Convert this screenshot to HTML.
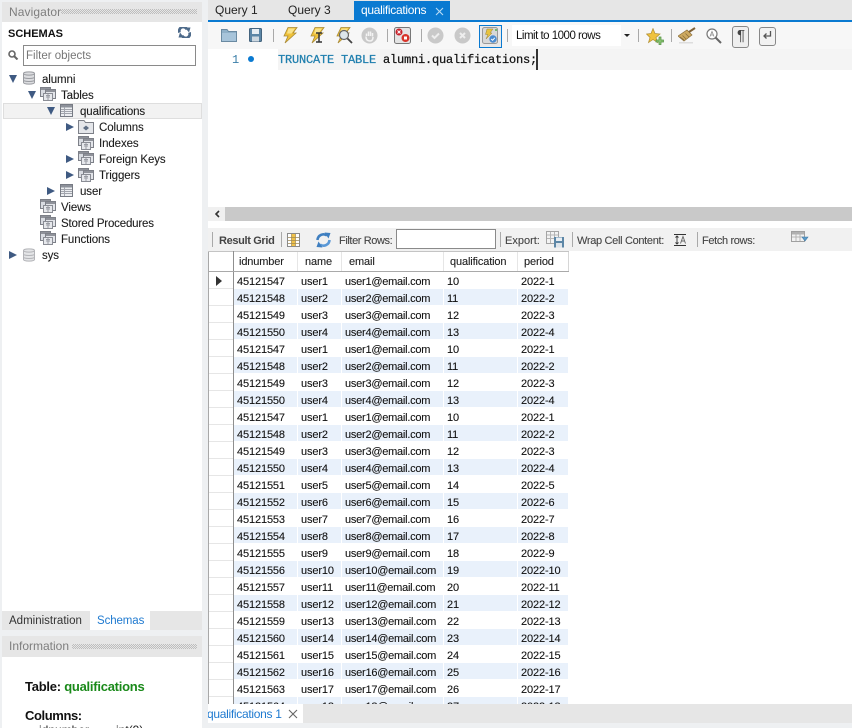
<!DOCTYPE html>
<html><head><meta charset="utf-8"><title>MySQL Workbench</title>
<style>
html,body{margin:0;padding:0}
body{width:852px;height:728px;overflow:hidden;position:relative;background:#eef0f2;font-family:"Liberation Sans",sans-serif;font-size:11.5px;color:#1c1c1c}
div,span,svg{position:absolute;white-space:nowrap}
.t{line-height:14px;height:14px}
.tree{letter-spacing:-.1px;-webkit-text-stroke:.1px #1c1c1c}
.tri{width:0;height:0}
.d{border-top:4.5px solid transparent;border-bottom:4.5px solid transparent;border-left:8px solid #3f5a82}
.o{border-left:4.5px solid transparent;border-right:4.5px solid transparent;border-top:8px solid #3f5a82}
.dots{height:5px;background:repeating-conic-gradient(#bdbdbd 0 25%,#e6e6e6 0 50%) 0 0/2px 2px}
.sep{width:1px;background:#a9a9a9}
.r{left:0;width:360px;height:17px}
.r span{top:3px;line-height:15px;font-size:11px;letter-spacing:-.13px;color:#111;-webkit-text-stroke:.1px #111}
.b{background:#e9f1fb;top:0;height:16px}
.a{left:29px}.n{left:93px}.e{left:137px;letter-spacing:-.24px!important}.q{left:239px}.p{left:313px}
.r.h span{font-size:11px;color:#222;line-height:20px;top:0}
.rt{font-size:11px;color:#444;top:234px;-webkit-text-stroke:.1px #444}
</style></head><body>

<svg width="0" height="0" style="left:0;top:0">
<defs>
<g id="grp"><rect x=".5" y=".5" width="10" height="9" fill="#d9dce2" stroke="#7d8088"/><rect x="1" y="1" width="9" height="2" fill="#8f929a"/><rect x="5.500" y="2.500" width="10" height="9" fill="#e3e5ea" stroke="#7d8088"/><rect x="6" y="3" width="9" height="2" fill="#8f929a"/><rect x="3.500" y="6.500" width="9" height="7" fill="#e6e8ec" stroke="#8a8d95"/><path d="M6 10h4M6 8.500h4M8 7v6" stroke="#9a9da5"/></g>
<g id="tbl"><rect x=".5" y=".5" width="12" height="12" fill="#eceef1" stroke="#777b84"/><rect x="1" y="1" width="11" height="2.500" fill="#8d919a"/><path d="M1 5.500h11M1 7.500h11M1 9.500h11M4.500 3v9" stroke="#a2a5ad"/></g>
<g id="db"><path d="M.5 2.500C.5 .4 11.500 .4 11.500 2.500V11.500C11.500 13.600 .5 13.600 .5 11.500Z" fill="#dcdde0" stroke="#9a9ca1"/><path d="M.5 2.500C.5 4.600 11.500 4.600 11.500 2.500M.5 6C.5 8 11.500 8 11.500 6M.5 9C.5 11 11.500 11 11.500 9" fill="none" stroke="#9a9ca1"/></g>
<g id="bolt"><path d="M6 .5H15L11 6H14L3 16L6 9H2Z" fill="#efc23a" stroke="#a98a36" stroke-width=".8"/><path d="M6.500 1.500H13L9.500 6.500H5Z" fill="#f8e38c"/></g>
<g id="gc"><circle cx="8.500" cy="8.500" r="8" fill="#c9c9c9"/></g>
</defs></svg>

<!-- LEFT PANEL -->
<div style="left:2px;top:2px;width:200px;height:20px;background:#e6e6e6"></div>
<div class="t" style="left:9px;top:5px;font-size:12px;color:#7e7e7e;letter-spacing:.1px">Navigator</div>
<div class="dots" style="left:61px;top:9px;width:136px"></div>
<div style="left:2px;top:22px;width:200px;height:589px;background:#fff"></div>
<div class="t" style="left:8px;top:27px;font-weight:bold;font-size:11px;color:#111">SCHEMAS</div>
<svg style="left:178px;top:27px" width="13" height="11" viewBox="0 0 13 11"><path d="M1.500 5.500A4 4 0 0 1 9 2.500M11.500 5.500A4 4 0 0 1 4 8.500" fill="none" stroke="#4d6a8a" stroke-width="2.800"/><path d="M7 .5L12.500 .5L11 5.500ZM6 10.500L.5 10.500L2 5.500Z" fill="#4d6a8a"/></svg>
<svg style="left:8px;top:50px" width="11" height="10" viewBox="0 0 11 10"><circle cx="4" cy="4" r="3" fill="none" stroke="#666" stroke-width="1.600"/><path d="M6 6L9.500 9.500" stroke="#666" stroke-width="2"/></svg>
<div style="left:23px;top:45px;width:171px;height:19px;border:1px solid #8a8a8a;background:#fff"></div>
<div class="t" style="left:26px;top:49px;color:#777;font-size:11.500px">Filter objects</div>

<div class="tri o" style="left:9px;top:75px"></div>
<svg style="left:23px;top:71px" width="12" height="14"><use href="#db"/></svg>
<div class="t tree" style="left:42px;top:73px">alumni</div>
<div class="tri o" style="left:28px;top:91px"></div>
<svg style="left:40px;top:87px" width="16" height="14"><use href="#grp"/></svg>
<div class="t tree" style="left:61px;top:89px">Tables</div>
<div style="left:3px;top:103px;width:197px;height:14px;background:#f2f2f2;border:1px solid #dedede"></div>
<div class="tri o" style="left:47px;top:107px"></div>
<svg style="left:60px;top:104px" width="13" height="13"><use href="#tbl"/></svg>
<div class="t tree" style="left:80px;top:105px">qualifications</div>
<div class="tri d" style="left:66px;top:123px"></div>
<svg style="left:78px;top:120px" width="16" height="14" viewBox="0 0 16 14"><path d="M.5 13.500V.5H6L7.500 2.500H15.500V13.500Z" fill="#e4e6ea" stroke="#7d8088"/><path d="M5 8L8 5.500L11 8L8 10.500Z" fill="#5f6f85"/></svg>
<div class="t tree" style="left:99px;top:121px">Columns</div>
<svg style="left:78px;top:136px" width="16" height="14"><use href="#grp"/></svg>
<div class="t tree" style="left:99px;top:137px">Indexes</div>
<div class="tri d" style="left:66px;top:155px"></div>
<svg style="left:78px;top:151px" width="16" height="15"><use href="#grp"/></svg>
<div class="t tree" style="left:99px;top:153px">Foreign Keys</div>
<div class="tri d" style="left:66px;top:171px"></div>
<svg style="left:78px;top:168px" width="16" height="14"><use href="#grp"/></svg>
<div class="t tree" style="left:99px;top:169px">Triggers</div>
<div class="tri d" style="left:47px;top:187px"></div>
<svg style="left:60px;top:184px" width="13" height="13"><use href="#tbl"/></svg>
<div class="t tree" style="left:80px;top:185px">user</div>
<svg style="left:40px;top:199px" width="16" height="14"><use href="#grp"/></svg>
<div class="t tree" style="left:61px;top:201px">Views</div>
<svg style="left:40px;top:215px" width="16" height="14"><use href="#grp"/></svg>
<div class="t tree" style="left:61px;top:217px;letter-spacing:-.18px">Stored Procedures</div>
<svg style="left:40px;top:231px" width="16" height="14"><use href="#grp"/></svg>
<div class="t tree" style="left:61px;top:233px">Functions</div>
<div class="tri d" style="left:9px;top:251px"></div>
<svg style="left:23px;top:248px;opacity:.75" width="12" height="14"><use href="#db"/></svg>
<div class="t tree" style="left:42px;top:249px">sys</div>

<div style="left:2px;top:611px;width:200px;height:19px;background:#e6e6e6"></div>
<div style="left:90px;top:611px;width:60px;height:19px;background:#fff"></div>
<div class="t" style="left:9px;top:614px;color:#333">Administration</div>
<div class="t" style="left:97px;top:614px;color:#1f7ad0;letter-spacing:-.1px">Schemas</div>
<div style="left:2px;top:636px;width:200px;height:21px;background:#e6e6e6"></div>
<div class="t" style="left:9px;top:639px;color:#7e7e7e;font-size:12px">Information</div>
<div class="dots" style="left:72px;top:644px;width:125px"></div>
<div style="left:2px;top:657px;width:200px;height:71px;background:#fff;overflow:hidden">
<div class="t" style="left:23px;top:23px;font-size:13px;font-weight:bold;color:#111;letter-spacing:-.25px">Table: <span style="position:static;color:#1a8a1a">qualifications</span></div>
<div class="t" style="left:23px;top:52px;font-size:13px;font-weight:bold;color:#111;letter-spacing:-.4px">Columns:</div>
<div class="t" style="left:37px;top:66px;font-size:12px">idnumber</div>
<div class="t" style="left:114px;top:66px;font-size:12px">int(9)</div>
</div>

<!-- TOP TABS -->
<div style="left:208px;top:0;width:644px;height:20px;background:#e6e6e6"></div>
<div class="t" style="left:215px;top:3px;font-size:12px;color:#222">Query 1</div>
<div class="t" style="left:288px;top:3px;font-size:12px;color:#222">Query 3</div>
<div style="left:354px;top:1px;width:96px;height:19px;background:#0a7ad1"></div>
<div class="t" style="left:361px;top:3px;font-size:12px;color:#fff;letter-spacing:-.3px">qualifications</div>
<svg style="left:435px;top:7px" width="9" height="9"><path d="M1 1L8 8M8 1L1 8" stroke="#b9dcf5" stroke-width="1.100"/></svg>
<div style="left:208px;top:20px;width:644px;height:2px;background:#0a7ad1"></div>

<!-- TOOLBAR -->
<div style="left:208px;top:22px;width:644px;height:27px;background:#f7f7f7"></div>
<svg style="left:221px;top:28px" width="16" height="14" viewBox="0 0 16 14"><path d="M.5 13.500V1.500H6L7.500 3.500H15.500V13.500Z" fill="#8fb0c8" stroke="#6a8aa2"/><rect x="1" y="5" width="14" height="8" fill="#a7c4da"/></svg>
<svg style="left:249px;top:28px" width="13" height="14" viewBox="0 0 13 14"><rect x=".5" y=".5" width="12" height="13" rx="1" fill="#5c86a6" stroke="#44647e"/><rect x="3" y="1" width="7" height="5" fill="#e8eef3"/><rect x="3" y="8.500" width="7" height="5" fill="#cfd9e1"/></svg>
<div class="sep" style="left:273px;top:29px;height:13px"></div>
<svg style="left:282px;top:27px" width="16" height="17"><use href="#bolt"/></svg>
<svg style="left:309px;top:27px" width="16" height="17"><use href="#bolt"/></svg>
<svg style="left:315px;top:32px" width="8" height="11" viewBox="0 0 8 11"><path d="M1 1H7M1 10H7M4 1V10" stroke="#333" stroke-width="1.500"/></svg>
<svg style="left:335px;top:27px" width="16" height="17"><use href="#bolt"/></svg>
<svg style="left:338px;top:29px" width="15" height="15" viewBox="0 0 15 15"><circle cx="6" cy="6" r="4.500" fill="#dde6ea" stroke="#666" stroke-width="1.200"/><path d="M9.500 9.500L14 14" stroke="#444" stroke-width="1.800"/></svg>
<svg style="left:361px;top:27px" width="17" height="17"><use href="#gc"/><path d="M5.500 9V6.500M7.500 9V4.500M9.500 9V4.500M11.500 9.500V6M5 9.500C5 13 7 14 9 14C11 14 12 12.500 12 10" stroke="#f3f3f3" stroke-width="1.500" fill="none"/></svg>
<div class="sep" style="left:387px;top:29px;height:13px"></div>
<svg style="left:394px;top:27px" width="17" height="17" viewBox="0 0 17 17"><rect x=".5" y=".5" width="16" height="16" rx="2" fill="#e4e4e4" stroke="#777"/><circle cx="5" cy="5" r="3.500" fill="#c8232c"/><path d="M3.500 3.500L6.500 6.500M6.500 3.500L3.500 6.500" stroke="#fff"/><circle cx="11.500" cy="11" r="4" fill="#d8342a"/><rect x="10" y="9.500" width="3" height="3" fill="#fff"/></svg>
<div class="sep" style="left:421px;top:29px;height:13px"></div>
<svg style="left:427px;top:27px" width="17" height="17"><use href="#gc"/><path d="M5 8.500L7.500 11L12 6.500" stroke="#eee" stroke-width="2" fill="none"/></svg>
<svg style="left:454px;top:27px" width="17" height="17"><use href="#gc"/><path d="M6 6L11 11M11 6L6 11" stroke="#eee" stroke-width="2" fill="none"/></svg>
<div style="left:479px;top:25px;width:21px;height:21px;border:1px solid #0a7ad1;background:#e9e9e9"></div>
<svg style="left:482px;top:27px" width="17" height="18" viewBox="0 0 17 18"><rect x=".5" y=".5" width="15" height="16" rx="2" fill="#d8d8d8" stroke="#999"/><path d="M5 2H11L8 6H10L4 12L6 7.500H3.500Z" fill="#e8c33e" stroke="#9c8436" stroke-width=".5"/><circle cx="11" cy="12" r="3.700" fill="#4a8bd0"/><path d="M9.200 12L10.600 13.300L12.800 10.800" stroke="#fff" fill="none"/><circle cx="14" cy="3" r="1" fill="#58b050"/></svg>
<div class="sep" style="left:507px;top:29px;height:13px"></div>
<div style="left:512px;top:25px;width:121px;height:21px;background:#fff"></div>
<div style="left:621px;top:25px;width:12px;height:21px;background:#f7f7f7"></div>
<div class="t" style="left:516px;top:29px;font-size:11.500px;letter-spacing:-.5px;color:#111">Limit to 1000 rows</div>
<div class="tri" style="left:624px;top:34px;border-left:3.500px solid transparent;border-right:3.500px solid transparent;border-top:3.500px solid #222"></div>
<div class="sep" style="left:638px;top:29px;height:13px"></div>
<svg style="left:646px;top:28px" width="18" height="17" viewBox="0 0 18 17"><path d="M7 .5L9 5.500L14 6L10 9.500L11.500 14.500L7 11.500L2.500 14.500L4 9.500L.5 6L5 5.500Z" fill="#efc23d" stroke="#b18f34" stroke-width=".7"/><path d="M13 9V12M10 12H13V9H15V12H17.500V14H15V16.500H13V14H10Z" fill="#8fc977" stroke="#4f8e3e" stroke-width=".7"/></svg>
<div class="sep" style="left:671px;top:29px;height:13px"></div>
<svg style="left:678px;top:27px" width="18" height="17" viewBox="0 0 18 17"><path d="M0 9L9 3L14 8L6 14Z" fill="#cda95f" stroke="#8b6f3c" stroke-width=".7"/><path d="M11 5L17 1" stroke="#7f6238" stroke-width="2"/><path d="M2 10L6 13M4.500 8.500L8 12M7.500 6.500L11 10" stroke="#8b6f3c" stroke-width=".8"/><rect x="1" y="15" width="14" height="1.500" fill="#ddd"/></svg>
<svg style="left:706px;top:28px" width="16" height="16" viewBox="0 0 16 16"><circle cx="6" cy="6" r="5" fill="#fff" stroke="#777" stroke-width="1.200"/><path d="M9.500 9.500L15 15" stroke="#666" stroke-width="2"/><path d="M4 8.500L6 3.500L8 8.500M4.800 7H7.200" stroke="#8a8a8a" fill="none" stroke-width=".8"/></svg>
<div style="left:732px;top:26px;width:15px;height:20px;border:1px solid #888;border-radius:3px;background:#efefef"></div>
<div class="t" style="left:733px;top:27px;width:16px;height:18px;line-height:18px;text-align:center;font-size:15px;color:#444">¶</div>
<div style="left:759px;top:27px;width:15px;height:17px;border:1px solid #888;border-radius:3px;background:#f2f2f2"></div>
<svg style="left:762px;top:31px" width="10" height="9" viewBox="0 0 10 9"><path d="M8.500 0V5H2M4.500 2.500L2 5L4.500 7.500" stroke="#555" stroke-width="1.300" fill="none"/></svg>

<!-- EDITOR -->
<div style="left:208px;top:49px;width:644px;height:158px;background:#fff"></div>
<div style="left:278px;top:49px;width:574px;height:21px;background:#f4f4f4"></div>
<div class="t" style="left:232px;top:53px;font-family:'Liberation Mono',monospace;font-size:12px;color:#3a7ea8">1</div>
<div style="left:248px;top:56px;width:6px;height:6px;border-radius:50%;background:#0a7ad1"></div>
<div class="t" style="left:278px;top:53px;font-family:'Liberation Mono',monospace;font-size:12px;letter-spacing:-.2px;color:#111;-webkit-text-stroke:.25px #111"><span style="position:static;color:#1f7fae;-webkit-text-stroke:.25px #1f7fae">TRUNCATE TABLE</span> alumni.qualifications;</div>
<div style="left:536px;top:49px;width:2px;height:21px;background:#333"></div>

<!-- H SCROLL -->
<div style="left:208px;top:207px;width:644px;height:14px;background:#c9c9c9"></div>
<div style="left:208px;top:207px;width:17px;height:14px;background:#f0f0f0"></div>
<svg style="left:214px;top:210px" width="7" height="8"><path d="M5 1L2 4L5 7" stroke="#333" stroke-width="1.600" fill="none"/></svg>
<div style="left:208px;top:221px;width:644px;height:7px;background:#fff"></div>

<!-- RESULT TOOLBAR -->
<div style="left:208px;top:228px;width:644px;height:23px;background:#f1f1f1"></div>
<div class="sep" style="left:212px;top:232px;height:15px"></div>
<div class="t" style="left:219px;top:234px;font-size:11px;font-weight:bold;color:#444;letter-spacing:-.35px">Result Grid</div>
<div class="sep" style="left:281px;top:232px;height:15px"></div>
<svg style="left:287px;top:233px" width="14" height="14" viewBox="0 0 14 14"><rect x=".5" y=".5" width="12" height="13" fill="#fff" stroke="#8a8a8a"/><rect x="4.500" y="1" width="4" height="12" fill="#f0c24a"/><path d="M1 4.500H12M1 7.500H12M1 10.500H12M4.500 1V13M8.500 1V13" stroke="#a08a55" stroke-width=".7"/></svg>
<svg style="left:315px;top:232px" width="17" height="16" viewBox="0 0 17 16"><path d="M2.500 8A6 6 0 0 1 12 3.500" fill="none" stroke="#3f7fc0" stroke-width="2.600"/><path d="M14.500 8A6 6 0 0 1 5 12.500" fill="none" stroke="#5a98d6" stroke-width="2.600"/><path d="M9.500 .5L15.500 1L13.500 6.500ZM7.500 15.500L1.500 15L3.500 9.500Z" fill="#3f7fc0"/></svg>
<div class="t rt" style="left:339px;letter-spacing:-.4px">Filter Rows:</div>
<div style="left:396px;top:229px;width:98px;height:18px;background:#fff;border:1px solid #8a8a8a"></div>
<div class="sep" style="left:500px;top:232px;height:15px"></div>
<div class="t rt" style="left:505px">Export:</div>
<svg style="left:546px;top:231px" width="19" height="17" viewBox="0 0 19 17"><rect x=".5" y=".5" width="12" height="12" fill="#f3f3f3" stroke="#a5a5a5"/><path d="M1 4H12M1 7.500H12M4.500 1V12M8.500 1V12" stroke="#b5b5b5"/><rect x="8" y="6" width="10" height="10.500" fill="#5c86a6"/><rect x="10" y="6.500" width="6" height="3.500" fill="#e8eef3"/><rect x="10" y="12" width="6" height="4.500" fill="#dde4ea"/></svg>
<div class="sep" style="left:572px;top:232px;height:15px"></div>
<div class="t rt" style="left:577px;letter-spacing:-.32px">Wrap Cell Content:</div>
<svg style="left:674px;top:234px" width="13" height="12" viewBox="0 0 13 12"><path d="M0 .5H12M0 11.500H12M3 2V10M1.500 3.500L3 2L4.500 3.500M1.500 8.500L3 10L4.500 8.500" stroke="#333" fill="none" stroke-width=".9"/><path d="M6.500 9.500L9 2.500L11.500 9.500M7.500 7H10.500" stroke="#666" fill="none" stroke-width=".9"/></svg>
<div class="sep" style="left:697px;top:232px;height:15px"></div>
<div class="t rt" style="left:702px;letter-spacing:-.35px">Fetch rows:</div>
<svg style="left:791px;top:231px" width="18" height="13" viewBox="0 0 18 13"><rect x=".5" y=".5" width="13" height="10" fill="#f2f2f2" stroke="#a0a0a0"/><rect x="1" y="1" width="12" height="2.500" fill="#b0b0b0"/><path d="M1 6H13M5 1V10M9 1V10" stroke="#b5b5b5"/><path d="M11 6H17L14 10Z" fill="#5a9ac8" stroke="#3f7aa6" stroke-width=".6"/></svg>

<!-- GRID -->
<div style="left:208px;top:251px;width:644px;height:453px;background:#fff;overflow:hidden">
 <div style="left:0;top:0;width:1px;height:453px;background:#a8a8a8"></div>
 <div style="left:0;top:0;width:361px;height:1px;background:#c4c4c4"></div>
 <div style="left:25px;top:0;width:1px;height:453px;background:#8f8f8f"></div>
 <div style="left:1px;top:20px;width:360px;height:1px;background:#a9a9a9"></div>
 <div style="left:89px;top:1px;width:1px;height:19px;background:#e6e6e6"></div>
 <div style="left:133px;top:1px;width:1px;height:19px;background:#e6e6e6"></div>
 <div style="left:235px;top:1px;width:1px;height:19px;background:#e6e6e6"></div>
 <div style="left:309px;top:1px;width:1px;height:19px;background:#e6e6e6"></div>
 <div style="left:360px;top:1px;width:1px;height:19px;background:#d6d6d6"></div>
 <div class="r h" style="top:1px;height:20px"><span style="left:31px">idnumber</span><span style="left:97px">name</span><span style="left:141px">email</span><span style="left:242px">qualification</span><span style="left:316px">period</span></div>
 <div class="tri" style="left:8px;top:25px;border-top:5px solid transparent;border-bottom:5px solid transparent;border-left:6px solid #333"></div>
 <div style="left:0;top:21px;width:360px;height:432px">
<div class="r" style="top:0"><span class="a">45121547</span><span class="n">user1</span><span class="e">user1@email.com</span><span class="q">10</span><span class="p">2022-1</span></div>
<div class="r" style="top:17px"><div class="b" style="left:26px;width:63px"></div><div class="b" style="left:90px;width:43px"></div><div class="b" style="left:134px;width:101px"></div><div class="b" style="left:236px;width:73px"></div><div class="b" style="left:310px;width:50px"></div><span class="a">45121548</span><span class="n">user2</span><span class="e">user2@email.com</span><span class="q">11</span><span class="p">2022-2</span></div>
<div class="r" style="top:34px"><span class="a">45121549</span><span class="n">user3</span><span class="e">user3@email.com</span><span class="q">12</span><span class="p">2022-3</span></div>
<div class="r" style="top:51px"><div class="b" style="left:26px;width:63px"></div><div class="b" style="left:90px;width:43px"></div><div class="b" style="left:134px;width:101px"></div><div class="b" style="left:236px;width:73px"></div><div class="b" style="left:310px;width:50px"></div><span class="a">45121550</span><span class="n">user4</span><span class="e">user4@email.com</span><span class="q">13</span><span class="p">2022-4</span></div>
<div class="r" style="top:68px"><span class="a">45121547</span><span class="n">user1</span><span class="e">user1@email.com</span><span class="q">10</span><span class="p">2022-1</span></div>
<div class="r" style="top:85px"><div class="b" style="left:26px;width:63px"></div><div class="b" style="left:90px;width:43px"></div><div class="b" style="left:134px;width:101px"></div><div class="b" style="left:236px;width:73px"></div><div class="b" style="left:310px;width:50px"></div><span class="a">45121548</span><span class="n">user2</span><span class="e">user2@email.com</span><span class="q">11</span><span class="p">2022-2</span></div>
<div class="r" style="top:102px"><span class="a">45121549</span><span class="n">user3</span><span class="e">user3@email.com</span><span class="q">12</span><span class="p">2022-3</span></div>
<div class="r" style="top:119px"><div class="b" style="left:26px;width:63px"></div><div class="b" style="left:90px;width:43px"></div><div class="b" style="left:134px;width:101px"></div><div class="b" style="left:236px;width:73px"></div><div class="b" style="left:310px;width:50px"></div><span class="a">45121550</span><span class="n">user4</span><span class="e">user4@email.com</span><span class="q">13</span><span class="p">2022-4</span></div>
<div class="r" style="top:136px"><span class="a">45121547</span><span class="n">user1</span><span class="e">user1@email.com</span><span class="q">10</span><span class="p">2022-1</span></div>
<div class="r" style="top:153px"><div class="b" style="left:26px;width:63px"></div><div class="b" style="left:90px;width:43px"></div><div class="b" style="left:134px;width:101px"></div><div class="b" style="left:236px;width:73px"></div><div class="b" style="left:310px;width:50px"></div><span class="a">45121548</span><span class="n">user2</span><span class="e">user2@email.com</span><span class="q">11</span><span class="p">2022-2</span></div>
<div class="r" style="top:170px"><span class="a">45121549</span><span class="n">user3</span><span class="e">user3@email.com</span><span class="q">12</span><span class="p">2022-3</span></div>
<div class="r" style="top:187px"><div class="b" style="left:26px;width:63px"></div><div class="b" style="left:90px;width:43px"></div><div class="b" style="left:134px;width:101px"></div><div class="b" style="left:236px;width:73px"></div><div class="b" style="left:310px;width:50px"></div><span class="a">45121550</span><span class="n">user4</span><span class="e">user4@email.com</span><span class="q">13</span><span class="p">2022-4</span></div>
<div class="r" style="top:204px"><span class="a">45121551</span><span class="n">user5</span><span class="e">user5@email.com</span><span class="q">14</span><span class="p">2022-5</span></div>
<div class="r" style="top:221px"><div class="b" style="left:26px;width:63px"></div><div class="b" style="left:90px;width:43px"></div><div class="b" style="left:134px;width:101px"></div><div class="b" style="left:236px;width:73px"></div><div class="b" style="left:310px;width:50px"></div><span class="a">45121552</span><span class="n">user6</span><span class="e">user6@email.com</span><span class="q">15</span><span class="p">2022-6</span></div>
<div class="r" style="top:238px"><span class="a">45121553</span><span class="n">user7</span><span class="e">user7@email.com</span><span class="q">16</span><span class="p">2022-7</span></div>
<div class="r" style="top:255px"><div class="b" style="left:26px;width:63px"></div><div class="b" style="left:90px;width:43px"></div><div class="b" style="left:134px;width:101px"></div><div class="b" style="left:236px;width:73px"></div><div class="b" style="left:310px;width:50px"></div><span class="a">45121554</span><span class="n">user8</span><span class="e">user8@email.com</span><span class="q">17</span><span class="p">2022-8</span></div>
<div class="r" style="top:272px"><span class="a">45121555</span><span class="n">user9</span><span class="e">user9@email.com</span><span class="q">18</span><span class="p">2022-9</span></div>
<div class="r" style="top:289px"><div class="b" style="left:26px;width:63px"></div><div class="b" style="left:90px;width:43px"></div><div class="b" style="left:134px;width:101px"></div><div class="b" style="left:236px;width:73px"></div><div class="b" style="left:310px;width:50px"></div><span class="a">45121556</span><span class="n">user10</span><span class="e">user10@email.com</span><span class="q">19</span><span class="p">2022-10</span></div>
<div class="r" style="top:306px"><span class="a">45121557</span><span class="n">user11</span><span class="e">user11@email.com</span><span class="q">20</span><span class="p">2022-11</span></div>
<div class="r" style="top:323px"><div class="b" style="left:26px;width:63px"></div><div class="b" style="left:90px;width:43px"></div><div class="b" style="left:134px;width:101px"></div><div class="b" style="left:236px;width:73px"></div><div class="b" style="left:310px;width:50px"></div><span class="a">45121558</span><span class="n">user12</span><span class="e">user12@email.com</span><span class="q">21</span><span class="p">2022-12</span></div>
<div class="r" style="top:340px"><span class="a">45121559</span><span class="n">user13</span><span class="e">user13@email.com</span><span class="q">22</span><span class="p">2022-13</span></div>
<div class="r" style="top:357px"><div class="b" style="left:26px;width:63px"></div><div class="b" style="left:90px;width:43px"></div><div class="b" style="left:134px;width:101px"></div><div class="b" style="left:236px;width:73px"></div><div class="b" style="left:310px;width:50px"></div><span class="a">45121560</span><span class="n">user14</span><span class="e">user14@email.com</span><span class="q">23</span><span class="p">2022-14</span></div>
<div class="r" style="top:374px"><span class="a">45121561</span><span class="n">user15</span><span class="e">user15@email.com</span><span class="q">24</span><span class="p">2022-15</span></div>
<div class="r" style="top:391px"><div class="b" style="left:26px;width:63px"></div><div class="b" style="left:90px;width:43px"></div><div class="b" style="left:134px;width:101px"></div><div class="b" style="left:236px;width:73px"></div><div class="b" style="left:310px;width:50px"></div><span class="a">45121562</span><span class="n">user16</span><span class="e">user16@email.com</span><span class="q">25</span><span class="p">2022-16</span></div>
<div class="r" style="top:408px"><span class="a">45121563</span><span class="n">user17</span><span class="e">user17@email.com</span><span class="q">26</span><span class="p">2022-17</span></div>
<div class="r" style="top:425px"><div class="b" style="left:26px;width:63px"></div><div class="b" style="left:90px;width:43px"></div><div class="b" style="left:134px;width:101px"></div><div class="b" style="left:236px;width:73px"></div><div class="b" style="left:310px;width:50px"></div><span class="a">45121564</span><span class="n">user18</span><span class="e">user18@email.com</span><span class="q">27</span><span class="p">2022-18</span></div>
 </div>
 <div style="left:1px;top:37px;width:24px;height:1px;background:#e6e6e6;box-shadow:0 17px #e6e6e6,0 34px #e6e6e6,0 51px #e6e6e6,0 68px #e6e6e6,0 85px #e6e6e6,0 102px #e6e6e6,0 119px #e6e6e6,0 136px #e6e6e6,0 153px #e6e6e6,0 170px #e6e6e6,0 187px #e6e6e6,0 204px #e6e6e6,0 221px #e6e6e6,0 238px #e6e6e6,0 255px #e6e6e6,0 272px #e6e6e6,0 289px #e6e6e6,0 306px #e6e6e6,0 323px #e6e6e6,0 340px #e6e6e6,0 357px #e6e6e6,0 374px #e6e6e6,0 391px #e6e6e6,0 408px #e6e6e6"></div>
</div>

<!-- BOTTOM TABS -->
<div style="left:208px;top:704px;width:644px;height:19px;background:#e6e6e6"></div>
<div style="left:208px;top:704px;width:95px;height:19px;background:#fff;overflow:hidden">
<div class="t" style="left:-1px;top:3px;font-size:12px;color:#1f7ad0;letter-spacing:-.3px">qualifications 1</div>
</div>
<svg style="left:288px;top:709px" width="10" height="10"><path d="M1 1L9 9M9 1L1 9" stroke="#666" stroke-width="1.100"/></svg>
<div style="left:208px;top:723px;width:644px;height:5px;background:#eef0f2"></div>
</body></html>
